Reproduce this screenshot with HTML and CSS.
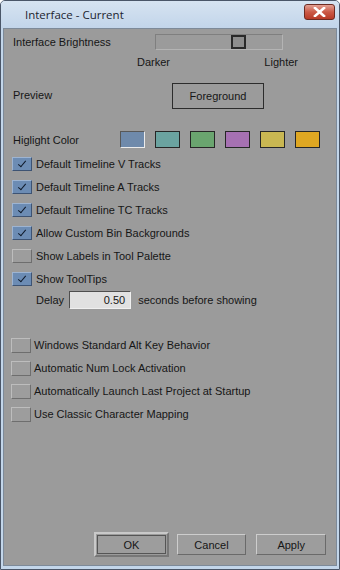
FILE: index.html
```html
<!DOCTYPE html>
<html>
<head>
  <meta charset="utf-8">
  <title>Interface - Current</title>
  <link rel="stylesheet" href="styles.css">
</head>
<body>
  <div class="window">
    <div class="titlebar">
      <span class="title">Interface - Current</span>
      <span class="close">
        <svg width="13" height="10" viewBox="0 0 13 10"><path d="M2 1 L11 9 M11 1 L2 9" stroke="#fff" stroke-width="2.6" stroke-linecap="square"/></svg>
      </span>
    </div>

    <div class="content">
      <div class="row bright">
        <span class="label">Interface Brightness</span>
        <div class="slider"><span class="thumb"></span></div>
      </div>
      <div class="ends">
        <span>Darker</span>
        <span>Lighter</span>
      </div>

      <div class="row preview">
        <span class="label">Preview</span>
        <div class="fg">Foreground</div>
      </div>

      <div class="row highlight">
        <span class="hlabel">Higlight Color</span>
        <div class="swatches">
          <span class="sw sel" style="background:#6f8aab"></span>
          <span class="sw" style="background:#6ba3a0"></span>
          <span class="sw" style="background:#6aa56f"></span>
          <span class="sw" style="background:#a671b2"></span>
          <span class="sw" style="background:#c9b752"></span>
          <span class="sw" style="background:#dfa722"></span>
        </div>
      </div>

      <div class="checks">
        <div class="check on"><span class="box"></span>Default Timeline V Tracks</div>
        <div class="check on"><span class="box"></span>Default Timeline A Tracks</div>
        <div class="check on"><span class="box"></span>Default Timeline TC Tracks</div>
        <div class="check on"><span class="box"></span>Allow Custom Bin Backgrounds</div>
        <div class="check"><span class="box"></span>Show Labels in Tool Palette</div>
        <div class="check on"><span class="box"></span>Show ToolTips</div>
      </div>

      <div class="delay">
        <span>Delay</span>
        <span class="field">0.50</span>
        <span>seconds before showing</span>
      </div>

      <div class="checks lower">
        <div class="check"><span class="box"></span>Windows Standard Alt Key Behavior</div>
        <div class="check"><span class="box"></span>Automatic Num Lock Activation</div>
        <div class="check"><span class="box"></span>Automatically Launch Last Project at Startup</div>
        <div class="check"><span class="box"></span>Use Classic Character Mapping</div>
      </div>

      <div class="buttons">
        <span class="focus"><span class="btn">OK</span></span>
        <span class="btn">Cancel</span>
        <span class="btn apply">Apply</span>
      </div>
    </div>
  </div>
</body>
</html>
```

FILE: styles.css
```css
* {
  box-sizing: border-box;
}

body {
  margin: 0;
  font-family: "Liberation Sans", Arial, sans-serif;
  font-size: 11px;
  color: #161616;
}

.window {
  width: 340px;
  height: 570px;
  border: 1px solid #4a5668;
  border-radius: 5px 5px 0 0;
  background: #c3d6ea;
  display: flex;
  flex-direction: column;
}

.titlebar {
  height: 27px;
  display: flex;
  align-items: center;
  justify-content: space-between;
  padding: 0 4px 2px 24px;
  background: linear-gradient(#d6e3f1, #c2d5ea);
  border-radius: 4px 4px 0 0;
}

.title {
  font-family: "Open Sans", "Liberation Sans", sans-serif;
  font-size: 11.5px;
  color: #1c2430;
  margin-top: 1px;
}

.close {
  width: 31px;
  height: 16px;
  margin-top: -4px;
  border: 1px solid #6d2b22;
  border-radius: 3px;
  background: linear-gradient(#e3a194, #cb5a47 50%, #b83a27);
  display: flex;
  align-items: center;
  justify-content: center;
}

.content {
  flex: 1;
  margin: 0 2px 3px 2px;
  background: #9b9b9b;
  border: 1px solid #7d8a99;
  padding: 5px 0 0 9px;
  display: flex;
  flex-direction: column;
}

.row {
  display: flex;
  align-items: center;
}

.label {
  width: 142px;
}

.slider {
  width: 128px;
  height: 16px;
  border: 1px solid #7f7f7f;
  border-right-color: #b4b4b4;
  border-bottom-color: #b4b4b4;
  position: relative;
}

.thumb {
  position: absolute;
  left: 75px;
  top: 0;
  width: 15px;
  height: 14px;
  border: 2px solid #2a2a2a;
  background: #8d8d8d;
}

.ends {
  display: flex;
  justify-content: space-between;
  width: 285px;
  padding-left: 124px;
  margin-top: 6px;
  height: 14px;
}

.preview {
  margin-top: 13px;
}

.preview .label {
  width: 159px;
  margin-top: -2px;
}

.fg {
  width: 92px;
  height: 26px;
  border: 1px solid #2c2c2c;
  display: flex;
  align-items: center;
  justify-content: center;
  font-size: 11px;
}

.highlight {
  margin-top: 22px;
}

.hlabel {
  width: 107px;
}

.swatches {
  display: flex;
  gap: 10px;
}

.sw {
  width: 25px;
  height: 17px;
  border: 1px solid #262626;
}

.sw.sel {
  border: 1px solid #ececec;
  border-top-color: #585858;
  border-left-color: #585858;
}

.checks {
  margin-top: 9px;
  margin-left: -1px;
  display: flex;
  flex-direction: column;
  gap: 9px;
}

.check {
  display: flex;
  align-items: center;
  height: 14px;
}

.box {
  width: 20px;
  height: 14px;
  margin-right: 4px;
  border: 1px solid #bdbdbd;
  border-right-color: #6e6e6e;
  border-bottom-color: #6e6e6e;
  background: #9d9d9d;
  position: relative;
}

.check.on .box {
  background: #6c8cb4;
  border-color: #9db4d2 #3d5373 #3d5373 #9db4d2;
}

.check.on .box::after {
  content: "";
  position: absolute;
  left: 7px;
  top: 1px;
  width: 3px;
  height: 7px;
  border: solid #0f1a2a;
  border-width: 0 1.5px 1.5px 0;
  transform: rotate(40deg);
}

.delay {
  display: flex;
  align-items: center;
  margin-top: 5px;
  padding-left: 23px;
  height: 18px;
}

.field {
  width: 62px;
  height: 18px;
  margin: 0 7px 0 5px;
  background: #e1e1e1;
  border: 1px solid #4e4e4e;
  border-right-color: #f0f0f0;
  border-bottom-color: #f0f0f0;
  text-align: right;
  padding: 2px 5px 0 0;
}

.lower {
  margin-top: 29px;
  margin-left: -2px;
}

.lower .box {
  width: 20px;
  height: 15px;
  margin-right: 3px;
}

.buttons {
  margin-top: auto;
  margin-bottom: 8px;
  display: flex;
  align-items: center;
  padding-left: 81px;
}

.btn {
  width: 70px;
  height: 21px;
  border: 1px solid #cdcdcd;
  border-right-color: #6a6a6a;
  border-bottom-color: #6a6a6a;
  background: #9d9d9d;
  display: flex;
  align-items: center;
  justify-content: center;
  margin-right: 10px;
}

.focus {
  width: 75px;
  border: 2px solid #c9c9c9;
  border-right-color: #777;
  border-bottom-color: #777;
  padding: 1px;
  margin-right: 8px;
}

.focus .btn {
  margin: 0;
  border-color: #555;
  width: 100%;
  height: 19px;
}
```
